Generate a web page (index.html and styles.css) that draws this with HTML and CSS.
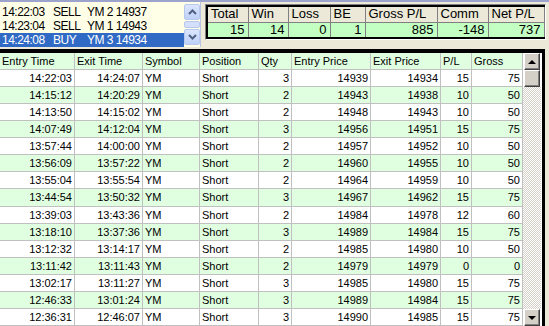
FILE: index.html
```html
<!DOCTYPE html>
<html lang="en">
<head>
    <meta charset="UTF-8" />
    <title>Trade Log</title>
    <link rel="stylesheet" href="styles.css">
</head>
<body>
    <div class="top">
        <div class="orders">
            <ul class="order-list">
                <li><span>14:22:03</span><span>SELL</span><span>YM 2 14937</span></li>
                <li><span>14:23:04</span><span>SELL</span><span>YM 1 14943</span></li>
                <li class="selected"><span>14:24:08</span><span>BUY</span><span>YM 3 14934</span></li>
            </ul>
            <div class="list-scroll">
                <div class="xp-btn">
                    <svg width="9" height="6" viewBox="0 0 9 6"><path d="M1 5 L4.5 1.5 L8 5" fill="none" stroke="#4d6185" stroke-width="2"/></svg>
                </div>
                <div class="xp-thumb"></div>
                <div class="xp-btn">
                    <svg width="9" height="6" viewBox="0 0 9 6"><path d="M1 1 L4.5 4.5 L8 1" fill="none" stroke="#4d6185" stroke-width="2"/></svg>
                </div>
            </div>
        </div>
        <div class="stats-frame">
            <table class="stats">
                <colgroup>
                    <col style="width:41px"><col style="width:40px"><col style="width:42px"><col style="width:35px">
                    <col style="width:72px"><col style="width:51px"><col style="width:56px">
                </colgroup>
                <tr>
                    <th>Total</th><th>Win</th><th>Loss</th><th>BE</th><th>Gross P/L</th><th>Comm</th><th>Net P/L</th>
                </tr>
                <tr>
                    <td>15</td><td>14</td><td>0</td><td>1</td><td>885</td><td>-148</td><td>737</td>
                </tr>
            </table>
        </div>
    </div>

    <div class="grid-frame">
        <table class="trades">
            <colgroup>
                <col style="width:75px"><col style="width:68px"><col style="width:57px"><col style="width:59px">
                <col style="width:33px"><col style="width:79px"><col style="width:70px"><col style="width:31px">
                <col style="width:51px">
            </colgroup>
            <thead>
                <tr>
                    <th>Entry Time</th><th>Exit Time</th><th>Symbol</th><th>Position</th><th>Qty</th>
                    <th>Entry Price</th><th>Exit Price</th><th>P/L</th><th>Gross</th>
                </tr>
            </thead>
            <tbody>
                <tr><td>14:22:03</td><td>14:24:07</td><td class="txt">YM</td><td class="txt">Short</td><td>3</td><td>14939</td><td>14934</td><td>15</td><td>75</td></tr>
                <tr><td>14:15:12</td><td>14:20:29</td><td class="txt">YM</td><td class="txt">Short</td><td>2</td><td>14943</td><td>14938</td><td>10</td><td>50</td></tr>
                <tr><td>14:13:50</td><td>14:15:02</td><td class="txt">YM</td><td class="txt">Short</td><td>2</td><td>14948</td><td>14943</td><td>10</td><td>50</td></tr>
                <tr><td>14:07:49</td><td>14:12:04</td><td class="txt">YM</td><td class="txt">Short</td><td>3</td><td>14956</td><td>14951</td><td>15</td><td>75</td></tr>
                <tr><td>13:57:44</td><td>14:00:00</td><td class="txt">YM</td><td class="txt">Short</td><td>2</td><td>14957</td><td>14952</td><td>10</td><td>50</td></tr>
                <tr><td>13:56:09</td><td>13:57:22</td><td class="txt">YM</td><td class="txt">Short</td><td>2</td><td>14960</td><td>14955</td><td>10</td><td>50</td></tr>
                <tr><td>13:55:04</td><td>13:55:54</td><td class="txt">YM</td><td class="txt">Short</td><td>2</td><td>14964</td><td>14959</td><td>10</td><td>50</td></tr>
                <tr><td>13:44:54</td><td>13:50:32</td><td class="txt">YM</td><td class="txt">Short</td><td>3</td><td>14967</td><td>14962</td><td>15</td><td>75</td></tr>
                <tr><td>13:39:03</td><td>13:43:36</td><td class="txt">YM</td><td class="txt">Short</td><td>2</td><td>14984</td><td>14978</td><td>12</td><td>60</td></tr>
                <tr><td>13:18:10</td><td>13:37:36</td><td class="txt">YM</td><td class="txt">Short</td><td>3</td><td>14989</td><td>14984</td><td>15</td><td>75</td></tr>
                <tr><td>13:12:32</td><td>13:14:17</td><td class="txt">YM</td><td class="txt">Short</td><td>2</td><td>14985</td><td>14980</td><td>10</td><td>50</td></tr>
                <tr><td>13:11:42</td><td>13:11:43</td><td class="txt">YM</td><td class="txt">Short</td><td>2</td><td>14979</td><td>14979</td><td>0</td><td>0</td></tr>
                <tr><td>13:02:17</td><td>13:11:27</td><td class="txt">YM</td><td class="txt">Short</td><td>3</td><td>14985</td><td>14980</td><td>15</td><td>75</td></tr>
                <tr><td>12:46:33</td><td>13:01:24</td><td class="txt">YM</td><td class="txt">Short</td><td>3</td><td>14989</td><td>14984</td><td>15</td><td>75</td></tr>
                <tr><td>12:36:31</td><td>12:46:07</td><td class="txt">YM</td><td class="txt">Short</td><td>3</td><td>14990</td><td>14985</td><td>15</td><td>75</td></tr>
            </tbody>
        </table>
        <div class="vscroll">
            <div class="classic-btn"><span class="arrow-up"></span></div>
            <div class="classic-thumb"></div>
            <div class="track"></div>
            <div class="classic-btn"><span class="arrow-down"></span></div>
        </div>
    </div>
</body>
</html>
```

FILE: styles.css
```css
* {
    margin: 0;
    padding: 0;
    box-sizing: border-box;
    font-family: 'Liberation Sans', Arial, sans-serif;
}

body {
    width: 549px;
    height: 326px;
    overflow: hidden;
    background: #ece9d8;
    color: #000;
    display: flex;
    flex-direction: column;
}

/* Top strip: order list + summary */
.top {
    display: flex;
    align-items: flex-start;
    height: 49px;
    border-top: 2px solid #9ca4ce;
}

.orders {
    display: flex;
    width: 201px;
    height: 45px;
    background: #ffffe8;
    border-right: 1px solid #b8c4e0;
}

.order-list {
    list-style: none;
    width: 184px;
    padding-top: 3px;
}

.order-list li {
    display: grid;
    grid-template-columns: 51px 34px auto;
    height: 14px;
    line-height: 14px;
    padding-left: 2px;
    font-size: 12px;
    letter-spacing: -0.5px;
}

.order-list li.selected {
    background: #316ac5;
    color: #fff;
}

.list-scroll {
    width: 16px;
    display: flex;
    flex-direction: column;
    gap: 1px;
    padding-top: 2px;
}

.xp-btn {
    height: 16px;
    border: 1px solid #b7c9f0;
    border-radius: 2px;
    background: linear-gradient(#dbe6fd, #bfd0f7);
    display: flex;
    align-items: center;
    justify-content: center;
}

.xp-thumb {
    height: 7px;
    border: 1px solid #b7c9f0;
    border-radius: 2px;
    background: #d4dff9;
}

.stats-frame {
    margin: 2px 0 0 4px;
    border: 1px solid #808080;
    border-right-color: #fff;
    border-bottom-color: #fff;
    background: #ece9d8;
}

.stats {
    border: 2px solid #000;
    border-right: none;
    border-collapse: collapse;
    table-layout: fixed;
    font-size: 13px;
}

.stats th,
.stats td {
    height: 16px;
    border: 1px solid #808080;
    padding: 0 3px;
    white-space: nowrap;
    line-height: 14px;
}

.stats th {
    background: #ece9d8;
    font-weight: normal;
    text-align: left;
}

.stats td {
    background: #c3ffc3;
    text-align: right;
}

/* Trade grid */
.grid-frame {
    display: flex;
    width: 545px;
    flex: 1;
    border-top: 4px solid #000;
    border-right: 3px solid #000;
    background: #fff;
}

.trades {
    width: 523px;
    table-layout: fixed;
    border-spacing: 0;
    font-size: 11px;
}

.trades th,
.trades td {
    height: 17px;
    border-right: 1px solid #c0c0c0;
    border-bottom: 1px solid #c0c0c0;
    padding: 0 2px;
    white-space: nowrap;
    overflow: hidden;
    text-align: right;
}

.trades th {
    background: #e0ffe0;
    font-weight: normal;
    text-align: left;
}

.trades td.txt {
    text-align: left;
}

.trades tbody tr:nth-child(even) td {
    background: #e0ffe0;
}

.vscroll {
    width: 19px;
    display: flex;
    flex-direction: column;
    padding-left: 1px;
    background: #fff;
}

.classic-btn {
    width: 16px;
    height: 17px;
    background: #d4d0c8;
    border: 1px solid;
    border-color: #fff #404040 #404040 #fff;
    box-shadow: inset -1px -1px 0 #808080;
    display: flex;
    align-items: center;
    justify-content: center;
}

.classic-thumb {
    width: 16px;
    height: 17px;
    background: #d4d0c8;
    border: 1px solid;
    border-color: #fff #404040 #404040 #fff;
    box-shadow: inset -1px -1px 0 #808080;
}

.track {
    flex: 1;
    width: 18px;
    margin-left: -1px;
    background: repeating-conic-gradient(#d4d0c8 0 25%, #fff 0 50%) 0 0 / 2px 2px;
}

.arrow-up {
    border-left: 4px solid transparent;
    border-right: 4px solid transparent;
    border-bottom: 4px solid #000;
}

.arrow-down {
    border-left: 4px solid transparent;
    border-right: 4px solid transparent;
    border-top: 4px solid #000;
}
```
